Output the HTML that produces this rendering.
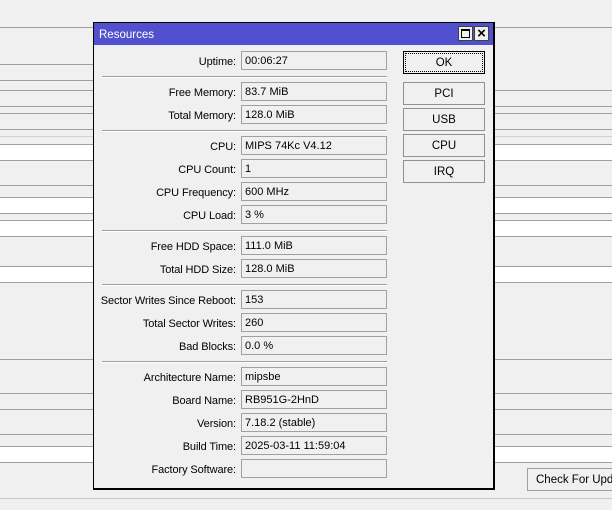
<!DOCTYPE html>
<html><head><style>
*{margin:0;padding:0;box-sizing:border-box}
body{width:612px;height:510px;background:#f0f0f0;position:relative;overflow:hidden;font-family:"Liberation Sans",Arial,sans-serif;font-size:11px;color:#000}
.hl{position:absolute;left:0;width:612px;height:1px;background:#a0a0a0}
.wb{position:absolute;left:0;width:612px;background:#fff}
.dlg{position:absolute;left:93px;top:22px;width:402px;height:468px;border:1px solid #000;border-right:2px solid #000;border-bottom:2px solid #000;background:#f0f0f0}
.tb{position:absolute;left:0;top:0;width:399px;height:22px;background:#5151cf;color:#fff;font-size:11.5px;padding:6px 0 0 5px}
.tbtn{position:absolute;top:3px;width:15px;height:15px;background:#f0f0f0;border:1px solid #404040}
.lbl{position:absolute;right:257px;text-align:right;white-space:nowrap;letter-spacing:-0.1px;margin-top:1px}
.fld{position:absolute;left:147px;width:146px;height:19px;border:1px solid #a0a0a0;background:#f0f0f0;padding:3px 0 0 3px;white-space:nowrap}
.sep{position:absolute;left:8px;width:285px;height:1px;background:#a0a0a0;border-bottom:1px solid #fff;box-sizing:content-box}
.btn{position:absolute;left:309px;width:82px;height:23px;border:1px solid #909090;background:#f0f0f0;text-align:center;padding-top:5px;font-size:11.5px}
</style></head><body>
<div class="hl" style="top:27px"></div>
<div class="hl" style="top:64px;width:100px"></div>
<div class="hl" style="top:80px;width:100px"></div>
<div class="hl" style="top:90px"></div>
<div class="hl" style="top:106px"></div>
<div class="hl" style="top:113px"></div>
<div class="hl" style="top:129px"></div>
<div class="hl" style="top:136px;background:#d0d0d0"></div>
<div class="wb" style="top:145px;height:15px"></div>
<div class="hl" style="top:144px"></div>
<div class="hl" style="top:160px"></div>
<div class="hl" style="top:185px"></div>
<div class="wb" style="top:198px;height:15px"></div>
<div class="hl" style="top:197px"></div>
<div class="hl" style="top:213px"></div>
<div class="wb" style="top:221px;height:15px"></div>
<div class="hl" style="top:220px"></div>
<div class="hl" style="top:236px"></div>
<div class="wb" style="top:267px;height:15px"></div>
<div class="hl" style="top:266px"></div>
<div class="hl" style="top:282px"></div>
<div class="hl" style="top:359px"></div>
<div class="hl" style="top:393px"></div>
<div class="hl" style="top:409px"></div>
<div class="hl" style="top:434px"></div>
<div class="wb" style="top:447px;height:15px"></div>
<div class="hl" style="top:446px"></div>
<div class="hl" style="top:462px"></div>
<div class="hl" style="top:498px;background:#c8c8c8"></div>
<div style="position:absolute;left:527px;top:468px;width:100px;height:23px;border:1px solid #a0a0a0;background:#f0f0f0;padding:5px 0 0 8px;white-space:nowrap;font-size:11.5px">Check For Updates</div>

<div class="dlg">
<div class="tb">Resources</div>
<div class="tbtn" style="left:364px"><div style="position:absolute;left:2px;top:2px;width:9px;height:9px;border:1px solid #000;border-top-width:2px"></div></div>
<div class="tbtn" style="left:380px;font-weight:bold;font-size:15px;line-height:13px;text-align:center">×</div>

<div class="lbl" style="top:32px">Uptime:</div><div class="fld" style="top:28px">00:06:27</div>
<div class="sep" style="top:53px"></div>
<div class="lbl" style="top:63px">Free Memory:</div><div class="fld" style="top:59px">83.7 MiB</div>
<div class="lbl" style="top:86px">Total Memory:</div><div class="fld" style="top:82px">128.0 MiB</div>
<div class="sep" style="top:107px"></div>
<div class="lbl" style="top:117px">CPU:</div><div class="fld" style="top:113px">MIPS 74Kc V4.12</div>
<div class="lbl" style="top:140px">CPU Count:</div><div class="fld" style="top:136px">1</div>
<div class="lbl" style="top:163px">CPU Frequency:</div><div class="fld" style="top:159px">600 MHz</div>
<div class="lbl" style="top:186px">CPU Load:</div><div class="fld" style="top:182px">3 %</div>
<div class="sep" style="top:207px"></div>
<div class="lbl" style="top:217px">Free HDD Space:</div><div class="fld" style="top:213px">111.0 MiB</div>
<div class="lbl" style="top:240px">Total HDD Size:</div><div class="fld" style="top:236px">128.0 MiB</div>
<div class="sep" style="top:261px"></div>
<div class="lbl" style="top:271px">Sector Writes Since Reboot:</div><div class="fld" style="top:267px">153</div>
<div class="lbl" style="top:294px">Total Sector Writes:</div><div class="fld" style="top:290px">260</div>
<div class="lbl" style="top:317px">Bad Blocks:</div><div class="fld" style="top:313px">0.0 %</div>
<div class="sep" style="top:338px"></div>
<div class="lbl" style="top:348px">Architecture Name:</div><div class="fld" style="top:344px">mipsbe</div>
<div class="lbl" style="top:371px">Board Name:</div><div class="fld" style="top:367px">RB951G-2HnD</div>
<div class="lbl" style="top:394px">Version:</div><div class="fld" style="top:390px">7.18.2 (stable)</div>
<div class="lbl" style="top:417px">Build Time:</div><div class="fld" style="top:413px">2025-03-11 11:59:04</div>
<div class="lbl" style="top:440px">Factory Software:</div><div class="fld" style="top:436px"></div>

<div class="btn" style="top:28px;border:1px solid #000;outline:1px dotted #000;outline-offset:-3px">OK</div>
<div class="btn" style="top:59px">PCI</div>
<div class="btn" style="top:85px">USB</div>
<div class="btn" style="top:111px">CPU</div>
<div class="btn" style="top:137px">IRQ</div>
</div>
</body></html>
